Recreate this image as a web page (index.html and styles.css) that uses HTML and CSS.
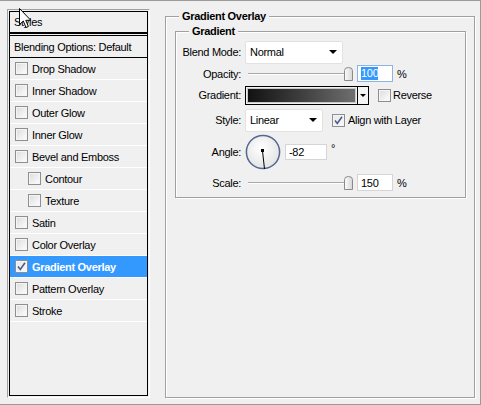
FILE: index.html
```html
<!DOCTYPE html>
<html>
<head>
<meta charset="utf-8">
<link rel="stylesheet" href="styles.css">
</head>
<body>
<div class="dialog">
  <div class="list-wrap">
    <div class="list">
      <div class="list-head">Styles</div>
      <div class="list-blend">Blending Options: Default</div>
      <div class="item"><span class="cb"></span>Drop Shadow</div>
      <div class="item"><span class="cb"></span>Inner Shadow</div>
      <div class="item"><span class="cb"></span>Outer Glow</div>
      <div class="item"><span class="cb"></span>Inner Glow</div>
      <div class="item"><span class="cb"></span>Bevel and Emboss</div>
      <div class="item sub"><span class="cb"></span>Contour</div>
      <div class="item sub"><span class="cb"></span>Texture</div>
      <div class="item"><span class="cb"></span>Satin</div>
      <div class="item"><span class="cb"></span>Color Overlay</div>
      <div class="item selected"><span class="cb checked"><svg viewBox="0 0 11 11" width="11" height="11"><path d="M2 5.5 L4.3 8.5 L9 1.8" fill="none" stroke="#4b5d8c" stroke-width="1.6"/></svg></span>Gradient Overlay</div>
      <div class="item"><span class="cb"></span>Pattern Overlay</div>
      <div class="item"><span class="cb"></span>Stroke</div>
    </div>
  </div>

  <div class="group outer">
    <span class="legend legend-outer">Gradient Overlay</span>
    <div class="group inner">
      <span class="legend legend-inner">Gradient</span>

      <div class="row r1">
        <span class="lbl">Blend Mode:</span>
        <div class="select sel-blend"><span>Normal</span><span class="arrow"></span></div>
      </div>

      <div class="row r2">
        <span class="lbl">Opacity:</span>
        <div class="slider">
          <div class="track"></div>
          <svg class="thumb" viewBox="0 0 9 14" width="9" height="14"><defs><linearGradient id="tg" x1="0" y1="0" x2="1" y2="0"><stop offset="0" stop-color="#fdfdfd"/><stop offset="1" stop-color="#d6d6d6"/></linearGradient></defs><path d="M0.5 13.5 V3.5 Q0.5 0.5 4.5 0.5 Q8.5 0.5 8.5 3.5 V13.5 Z" fill="url(#tg)" stroke="#8a8a8a"/></svg>
        </div>
        <div class="input focused"><span class="sel-text">100</span></div>
        <span class="unit">%</span>
      </div>

      <div class="row r3">
        <span class="lbl">Gradient:</span>
        <div class="grad"><div class="grad-fill"></div></div>
        <div class="grad-btn"><span class="arrow small"></span></div>
        <span class="cb reverse-cb"></span><span class="cb-label">Reverse</span>
      </div>

      <div class="row r4">
        <span class="lbl">Style:</span>
        <div class="select sel-style"><span>Linear</span><span class="arrow"></span></div>
        <span class="cb checked align-cb"><svg viewBox="0 0 11 11" width="11" height="11"><path d="M2 5.5 L4.3 8.5 L9 1.8" fill="none" stroke="#4b5d8c" stroke-width="1.6"/></svg></span><span class="cb-label">Align with Layer</span>
      </div>

      <div class="row r5">
        <span class="lbl">Angle:</span>
        <svg class="dial" viewBox="0 0 36 36" width="36" height="36">
          <defs><radialGradient id="dg" cx="0.45" cy="0.4" r="0.6"><stop offset="0" stop-color="#ffffff"/><stop offset="1" stop-color="#e4e4e4"/></radialGradient></defs>
          <circle cx="18" cy="18" r="16.6" fill="url(#dg)" stroke="#56688f" stroke-width="1.5"/>
          <line x1="17.5" y1="17" x2="19.5" y2="35" stroke="#000" stroke-width="1"/>
          <rect x="16" y="15" width="3" height="3" fill="#000"/>
        </svg>
        <div class="input angle-input">-82</div>
        <span class="deg">°</span>
      </div>

      <div class="row r6">
        <span class="lbl">Scale:</span>
        <div class="slider">
          <div class="track"></div>
          <svg class="thumb" viewBox="0 0 9 14" width="9" height="14"><path d="M0.5 13.5 V3.5 Q0.5 0.5 4.5 0.5 Q8.5 0.5 8.5 3.5 V13.5 Z" fill="url(#tg)" stroke="#8a8a8a"/></svg>
        </div>
        <div class="input">150</div>
        <span class="unit">%</span>
      </div>
    </div>
  </div>

  <svg class="cursor" viewBox="0 0 13 21" width="13" height="21"><path d="M0.5 0.5 V16.5 L4.3 13 L7 19.5 L9.4 18.5 L6.8 12.3 L11.8 12.3 Z" fill="#fff" stroke="#000" stroke-width="1" stroke-linejoin="miter"/></svg>
</div>
</body>
</html>
```
FILE: styles.css
```css
* { box-sizing: border-box; }
html, body { margin: 0; padding: 0; background: #f0f0f0; }
body {
  font-family: "Liberation Sans", Arial, sans-serif;
  font-size: 11px;
  letter-spacing: -0.3px;
  color: #000;
}
.dialog {
  position: relative;
  width: 481px;
  height: 405px;
  background: #f0f0f0;
  border-top: 1px solid #9a9a9a;
  border-right: 1px solid #9a9a9a;
  border-bottom: 1px solid #9a9a9a;
  display: flex;
  align-items: flex-start;
  overflow: hidden;
}

/* left list */
.list-wrap {
  margin: 8px 0 0 7px;
  width: 143px;
  height: 389px;
  border: 1px solid;
  border-color: #a0a0a0 #ffffff #ffffff #a0a0a0;
  padding: 1px;
  flex: none;
}
.list {
  width: 139px;
  height: 385px;
  border: 1px solid #000;
  background: #f0f0f0;
}
.list-head {
  height: 22px;
  border-bottom: 2px solid #000;
  padding-left: 4px;
  display: flex;
  align-items: center;
}
.list-blend {
  margin-top: 1px;
  height: 23px;
  border-top: 1px solid #000;
  border-bottom: 1px solid #000;
  padding-left: 4px;
  display: flex;
  align-items: center;
}
.item {
  height: 22px;
  border-bottom: 1px solid #ffffff;
  display: flex;
  align-items: center;
  padding-left: 5px;
}
.item.sub { padding-left: 18px; }
.item.selected {
  background: #3399ff;
  color: #fff;
  font-weight: bold;
}
.cb {
  width: 13px;
  height: 13px;
  border: 1px solid #8e8f8f;
  background: linear-gradient(135deg, #dcdcdc 0%, #f4f4f4 70%, #ffffff 100%);
  box-shadow: inset 0 0 0 1px #f5f5f5;
  margin-right: 4px;
  display: inline-flex;
  align-items: center;
  justify-content: center;
  flex: none;
}
.cb.checked { background: linear-gradient(135deg, #e8e8e8 0%, #fafafa 100%); }

/* groups */
.group {
  position: relative;
  border: 1px solid #a0a0a0;
  box-shadow: inset 1px 1px 0 #ffffff, 1px 1px 0 #ffffff;
}
.outer {
  margin: 15px 0 0 15px;
  width: 310px;
  height: 382px;
  padding: 14px 0 0 9px;
  flex: none;
}
.inner {
  width: 291px;
  height: 167px;
  padding: 8px 0 3px 0;
  display: flex;
  flex-direction: column;
}
.legend {
  position: absolute;
  top: -8px;
  background: #f0f0f0;
  font-weight: bold;
  padding: 0 3px;
  line-height: 14px;
}
.legend-outer { left: 13px; }
.legend-inner { left: 13px; }

.row {
  display: flex;
  align-items: center;
  flex: none;
}
.r1 { height: 24px; }
.r2 { height: 19px; }
.r3 { height: 24px; }
.r4 { height: 26px; }
.r5 { height: 38px; }
.r6 { height: 23px; }
.lbl {
  width: 65px;
  text-align: right;
  margin-right: 4px;
  flex: none;
}

.select {
  height: 23px;
  background: #fff;
  border: 1px solid #e2e2e2;
  border-radius: 2px;
  display: flex;
  align-items: center;
  justify-content: space-between;
  padding: 0 5px 0 4px;
}
.sel-blend { flex: 0 0 98px; width: 98px; }
.sel-style { flex: 0 0 78px; width: 78px; margin-right: 9px; }
.arrow {
  width: 0;
  height: 0;
  border-left: 4px solid transparent;
  border-right: 4px solid transparent;
  border-top: 4px solid #000;
}
.arrow.small {
  border-left-width: 3px;
  border-right-width: 3px;
  border-top-width: 3px;
}

.slider {
  position: relative;
  width: 108px;
  height: 16px;
  margin-right: 4px;
  flex: none;
}
.track {
  position: absolute;
  left: 3px;
  right: 4px;
  top: 7px;
  height: 2px;
  border-top: 1px solid #a9a9a9;
  border-bottom: 1px solid #ffffff;
}
.thumb {
  position: absolute;
  right: 0;
  top: 1px;
}
.input {
  width: 36px;
  height: 17px;
  background: #fff;
  border: 1px solid #d5d5d5;
  display: flex;
  align-items: center;
  padding-left: 3px;
  flex: none;
}
.input.focused { border-color: #8eb4e3; }
.sel-text { background: #3399ff; color: #fff; line-height: 13px; }
.unit { margin-left: 4px; }

.grad {
  width: 113px;
  height: 19px;
  border: 1px solid #000;
  padding: 1px;
  background: #f0f0f0;
  flex: none;
}
.grad-fill {
  width: 100%;
  height: 100%;
  background: linear-gradient(90deg, #121212 0%, #3a3a3a 45%, #6e6e6e 100%);
  border: 1px solid #c8c8c8;
}
.grad-btn {
  width: 12px;
  height: 19px;
  margin-left: -1px;
  border: 1px solid #000;
  background: #f4f4f4;
  display: flex;
  align-items: center;
  justify-content: center;
  margin-right: 9px;
  flex: none;
}
.cb-label { margin-left: -1px; }
.reverse-cb { margin-right: 3px; }

.dial { margin-right: 4px; flex: none; }
.angle-input { width: 42px; height: 16px; }
.deg { margin-left: 4px; position: relative; top: -4px; }

.cursor {
  position: absolute;
  left: 19px;
  top: 7px;
}
```
